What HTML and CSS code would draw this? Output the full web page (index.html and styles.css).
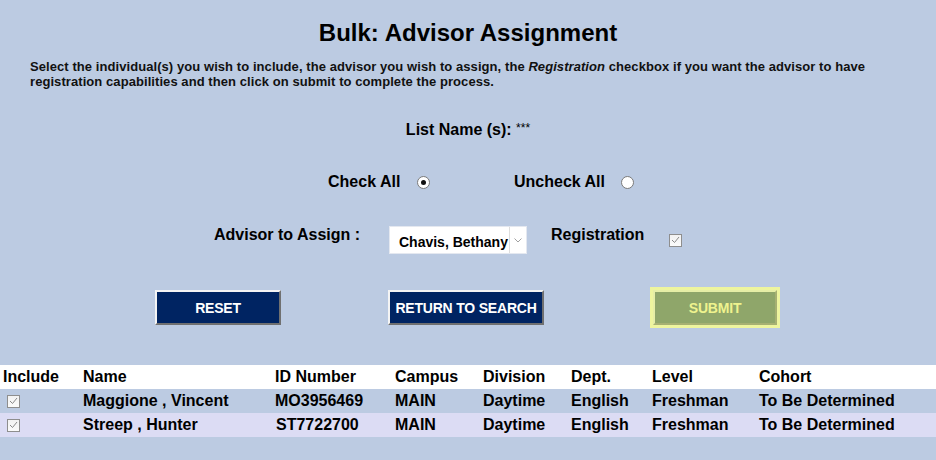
FILE: index.html
```html
<!DOCTYPE html>
<html lang="en">
<head>
<meta charset="utf-8">
<title>Bulk: Advisor Assignment</title>
<link rel="stylesheet" href="styles.css">
</head>
<body>
<div class="page">
  <h1 class="title">Bulk: Advisor Assignment</h1>
  <p class="desc"><span class="desc-line">Select the individual(s) you wish to include, the advisor you wish to assign, the <em>Registration</em> checkbox if you want the advisor to have</span><span class="desc-line">registration capabilities and then click on submit to complete the process.</span></p>

  <div class="listname">List Name (s): <span class="stars">***</span></div>

  <div class="check-row">
    <span class="lbl">Check All</span>
    <span class="radio checked"></span>
    <span class="lbl">Uncheck All</span>
    <span class="radio"></span>
  </div>

  <div class="advisor-row">
    <span class="lbl">Advisor to Assign :</span>
    <div class="select">
      <span class="sel-value">Chavis, Bethany</span>
      <span class="sel-arrow"><svg width="8" height="5" viewBox="0 0 8 5"><path d="M0.5 0.5 L4 4 L7.5 0.5" fill="none" stroke="#a0a0a0" stroke-width="1"/></svg></span>
    </div>
    <span class="lbl">Registration</span>
    <span class="cbox"><svg width="9" height="8" viewBox="0 0 9 8"><path d="M1 4 L3.5 6.5 L8 1" fill="none" stroke="#8a8a8a" stroke-width="1"/></svg></span>
  </div>

  <div class="button-row">
    <div class="btn-cell"><button class="btn btn-reset">RESET</button></div>
    <div class="btn-cell"><button class="btn btn-return">RETURN TO SEARCH</button></div>
    <div class="btn-cell"><button class="btn btn-submit">SUBMIT</button></div>
  </div>

  <table class="students">
    <colgroup>
      <col class="c-inc"><col class="c-name"><col class="c-id"><col class="c-campus"><col class="c-div"><col class="c-dept"><col class="c-level"><col class="c-cohort">
    </colgroup>
    <thead>
      <tr><th>Include</th><th>Name</th><th>ID Number</th><th>Campus</th><th>Division</th><th>Dept.</th><th>Level</th><th>Cohort</th></tr>
    </thead>
    <tbody>
      <tr class="row-a">
        <td><span class="cbox small"><svg width="9" height="8" viewBox="0 0 9 8"><path d="M1 4 L3.5 6.5 L8 1" fill="none" stroke="#8a8a8a" stroke-width="1"/></svg></span></td>
        <td>Maggione , Vincent</td><td>MO3956469</td><td>MAIN</td><td>Daytime</td><td>English</td><td>Freshman</td><td>To Be Determined</td>
      </tr>
      <tr class="row-b">
        <td><span class="cbox small"><svg width="9" height="8" viewBox="0 0 9 8"><path d="M1 4 L3.5 6.5 L8 1" fill="none" stroke="#8a8a8a" stroke-width="1"/></svg></span></td>
        <td>Streep , Hunter</td><td class="id2">ST7722700</td><td>MAIN</td><td>Daytime</td><td>English</td><td>Freshman</td><td>To Be Determined</td>
      </tr>
    </tbody>
  </table>
</div>
</body>
</html>
```

FILE: styles.css
```css
html, body {
  margin: 0;
  padding: 0;
  background: #bccbe2;
}

body {
  font-family: "Liberation Sans", Arial, sans-serif;
  color: #000;
  font-weight: bold;
}

.page {
  width: 936px;
  height: 460px;
  overflow: hidden;
}

.title {
  margin: 19px 0 0;
  font-size: 24px;
  line-height: 28px;
  text-align: center;
  font-weight: bold;
}

.desc {
  margin: 12px 0 0;
  padding: 0 30px;
  font-size: 13px;
  line-height: 15px;
  color: #111;
  letter-spacing: 0.07px;
}

.desc-line {
  display: block;
  white-space: nowrap;
}

.desc em {
  font-style: italic;
}

.listname {
  margin-top: 30px;
  font-size: 16px;
  line-height: 18px;
  text-align: center;
}

.stars {
  font-size: 12px;
  font-weight: normal;
  vertical-align: 3px;
}

.lbl {
  font-size: 16px;
  line-height: 18px;
}

.check-row {
  margin-top: 33px;
  display: grid;
  grid-template-columns: 89px 97px 107px 13px;
  justify-content: center;
  align-items: center;
  padding-left: 26px;
  height: 20px;
}

.radio {
  width: 13px;
  height: 13px;
  box-sizing: border-box;
  border: 1px solid #7a7a7a;
  border-radius: 50%;
  background: #fff;
  display: flex;
  align-items: center;
  justify-content: center;
  margin-top: 1px;
}

.radio.checked::after {
  content: "";
  width: 5px;
  height: 5px;
  border-radius: 50%;
  background: #111;
}

.advisor-row {
  margin-top: 34px;
  display: grid;
  grid-template-columns: 175px 162px 118px 13px;
  justify-content: center;
  align-items: start;
  padding-right: 40px;
  height: 28px;
}

.select {
  width: 138px;
  height: 28px;
  box-sizing: border-box;
  background: #fff;
  border: 1px solid #e4e8f0;
  display: flex;
  align-items: stretch;
}

.sel-value {
  flex: 1;
  font-size: 14px;
  line-height: 28px;
  padding-left: 9px;
  white-space: nowrap;
  margin-top: 1px;
}

.sel-arrow {
  width: 16px;
  border-left: 1px solid #dedede;
  display: flex;
  align-items: center;
  justify-content: center;
}

.cbox {
  width: 13px;
  height: 13px;
  box-sizing: border-box;
  border: 1px solid #8e8e8e;
  background: linear-gradient(#f2f2f2, #fbfbfb);
  display: flex;
  align-items: center;
  justify-content: center;
  align-self: center;
}

.button-row {
  margin-top: 33px;
  display: grid;
  grid-template-columns: 248px 248px 248px;
  justify-content: center;
  align-items: center;
  padding-right: 4px;
  height: 41px;
}

.btn-cell {
  display: flex;
  justify-content: center;
  align-items: center;
}

.btn {
  height: 35px;
  box-sizing: border-box;
  font-family: "Liberation Sans", Arial, sans-serif;
  font-weight: bold;
  font-size: 14px;
  color: #fff;
  background: #002462;
  border: 2px solid;
  border-color: #f4f4f4 #707070 #707070 #f4f4f4;
  padding: 0;
  letter-spacing: -0.2px;
  cursor: pointer;
}

.btn-reset {
  width: 126px;
}

.btn-return {
  width: 156px;
}

.btn-submit {
  width: 124px;
  margin-left: 2px;
  background: #8fa66a;
  color: #eef38e;
  border-color: #e6eea6 #a6b072 #a6b072 #e6eea6;
  box-shadow: 0 0 0 3px #eef59e;
}

.students {
  margin-top: 37px;
  width: 936px;
  border-collapse: collapse;
  table-layout: fixed;
  font-size: 16px;
}

.c-inc { width: 80px; }
.c-name { width: 192px; }
.c-id { width: 120px; }
.c-campus { width: 88px; }
.c-div { width: 88px; }
.c-dept { width: 81px; }
.c-level { width: 107px; }
.c-cohort { width: 180px; }

.students th,
.students td {
  height: 24px;
  padding: 0 0 0 3px;
  text-align: left;
  font-weight: bold;
  line-height: 24px;
  white-space: nowrap;
  vertical-align: middle;
}

.students thead tr {
  background: #fff;
}

.row-a {
  background: #bccbe2;
}

.row-b {
  background: #dcdcf4;
}

.students td .cbox.small {
  margin-left: 4px;
}

.students td.id2 {
  padding-left: 4px;
}
```
